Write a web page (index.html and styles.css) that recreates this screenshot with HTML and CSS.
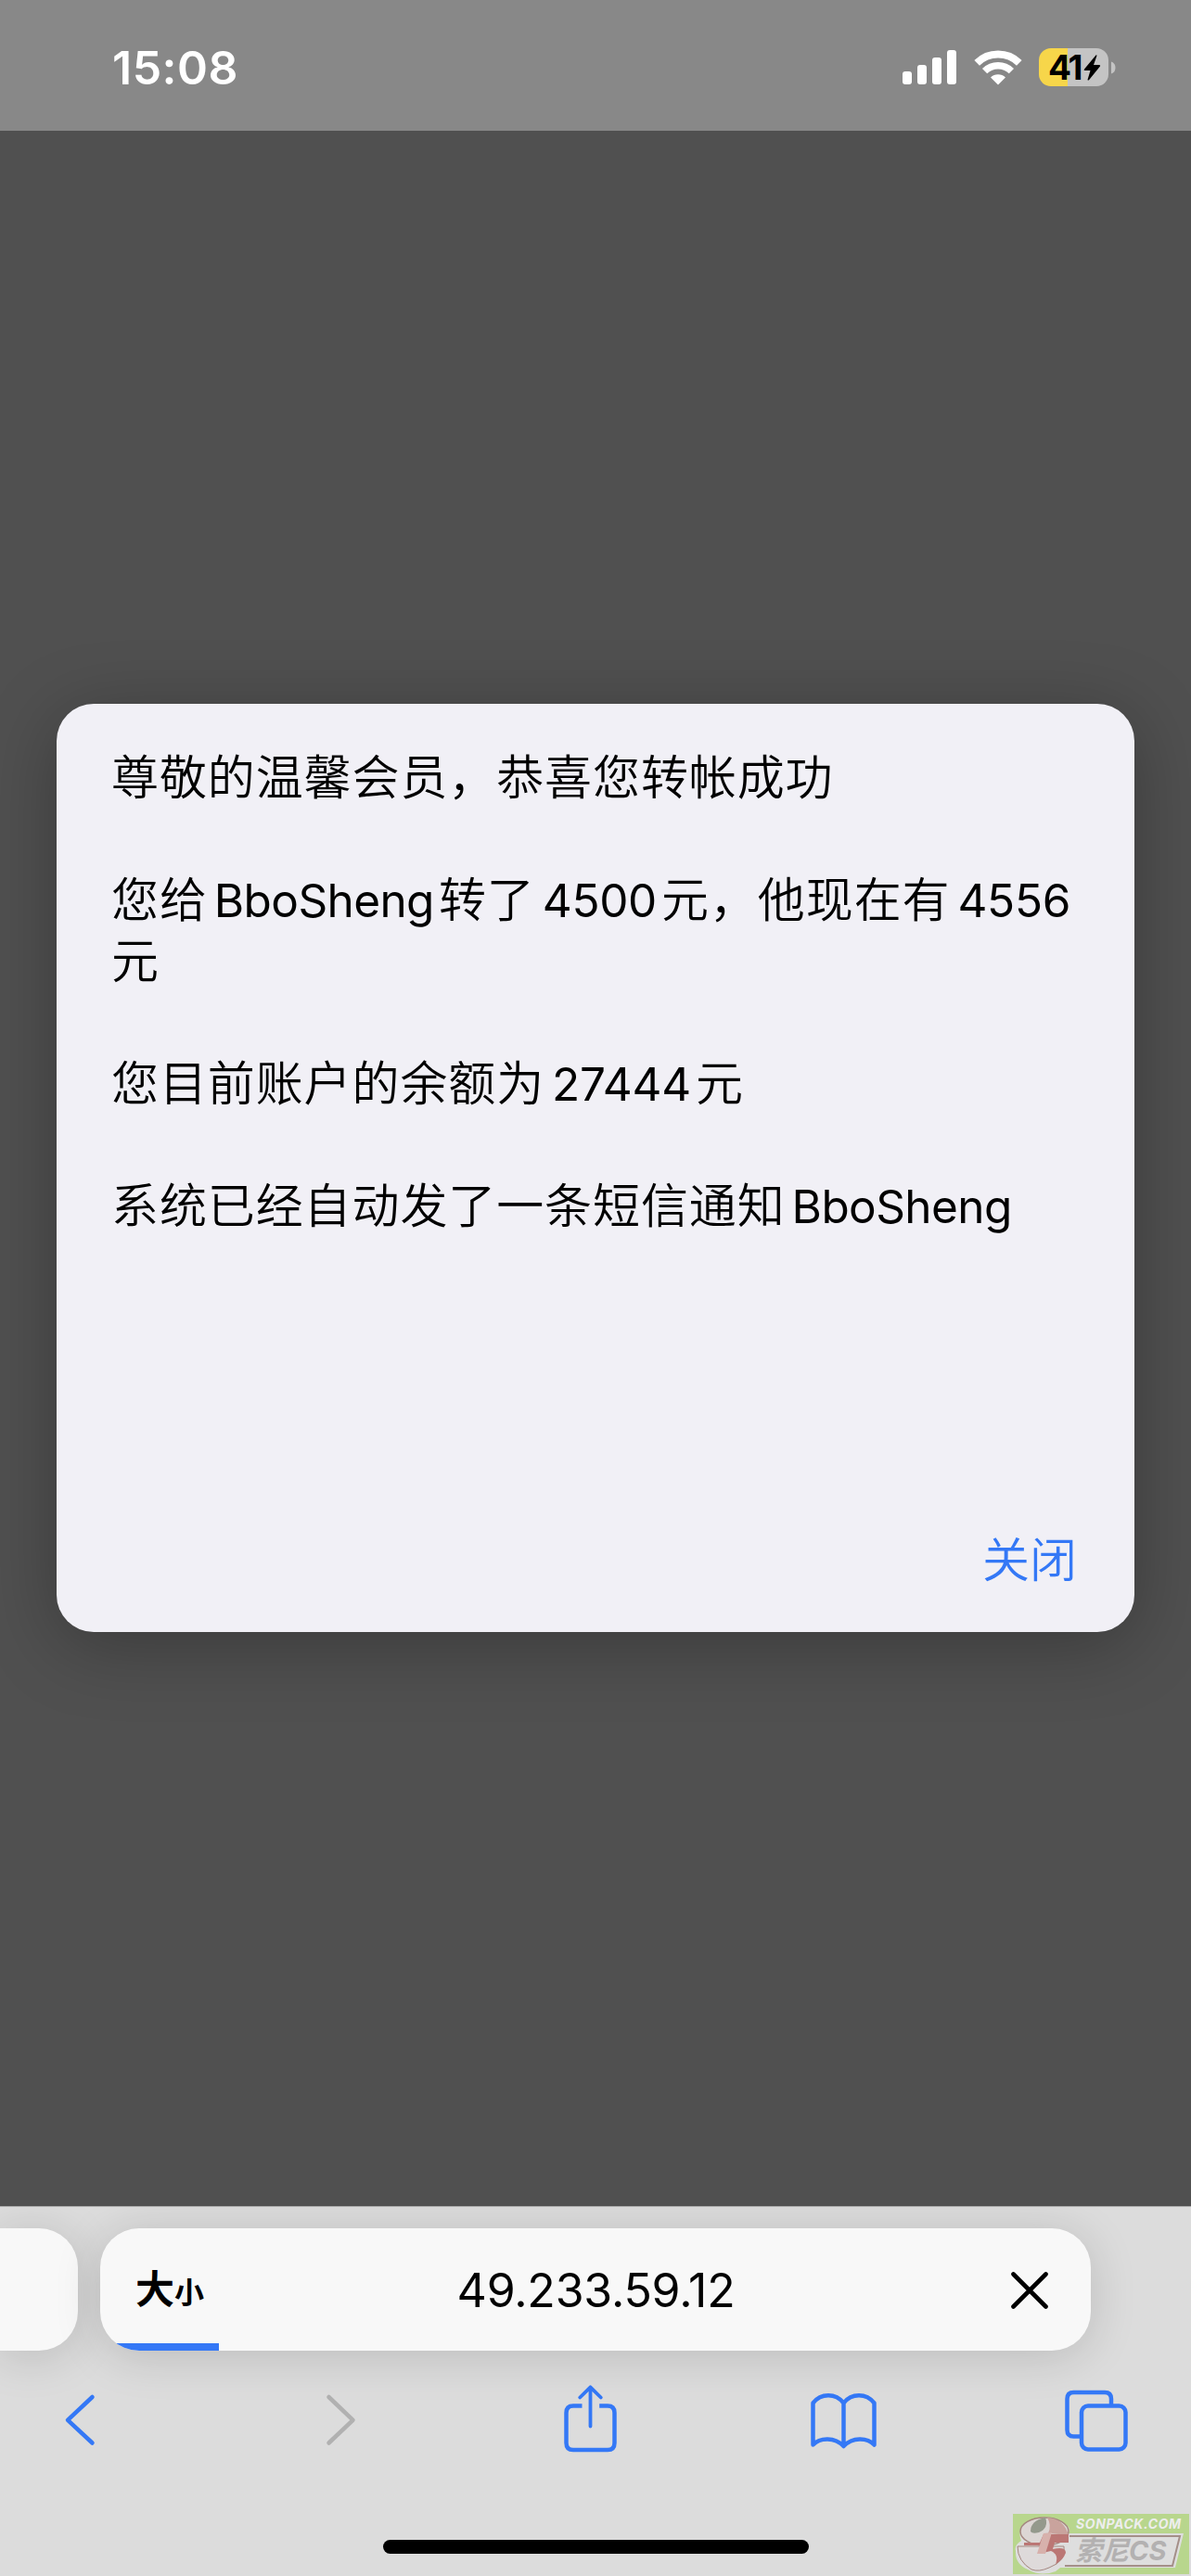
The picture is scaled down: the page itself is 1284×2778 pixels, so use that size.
FILE: index.html
```html
<!DOCTYPE html>
<html lang="zh-CN">

<head>
    <meta charset="UTF-8">
    <meta name="viewport" content="width=device-width, initial-scale=1.0">
    <title>49.233.59.12</title>
    <link rel="stylesheet" href="styles.css">
</head>

<body>
    <!-- Status bar -->
    <header class="status-bar">
        <span class="time">15:08</span>
        <div class="status-icons">
            <svg class="signal" width="58" height="37" viewBox="0 0 58 37" fill="#fff">
                <rect x="0" y="23" width="10" height="14" rx="3" />
                <rect x="16" y="16" width="10" height="21" rx="3" />
                <rect x="32" y="8" width="10" height="29" rx="3" />
                <rect x="48" y="0" width="10" height="37" rx="3" />
            </svg>
            <svg class="wifi" width="52" height="38" viewBox="0 0 52 38" fill="none" stroke="#fff">
                <path d="M3.200 13.800A32.500 32.500 0 0 1 48.800 13.800" stroke-width="8" />
                <path d="M11.600 22.600A20.500 20.500 0 0 1 40.400 22.600" stroke-width="7.500" />
                <path d="M18 29.600A11.500 11.500 0 0 1 34 29.600L26.500 37Q26 37.500 25.500 37Z" fill="#fff" stroke="none" />
            </svg>
            <div class="battery">
                <span class="level">41</span>
                <svg width="19" height="28" viewBox="0 0 19 28">
                    <path d="M13.500 0.500L1 15.500Q0 17 1.500 17H7.500L4.500 27Q5 28 6 27.200L18 12.500Q18.700 11 17 11H11L14.500 1Q14.300 0 13.500 0.500Z" />
                </svg>
            </div>
            <svg width="5" height="14" viewBox="0 0 5 14">
                <path d="M0 0.500Q4.500 2 4.500 7T0 13.500Z" fill="#c4c4c4" />
            </svg>
        </div>
    </header>

    <!-- Page covered by the alert -->
    <main class="page">
        <div class="alert">
            <div class="message">
                <p>尊敬的温馨会员，恭喜您转帐成功</p>
                <p>您给<span class="name">BboSheng</span>转了<span class="num">4500</span>元，他现在有<span class="num">4556</span><br>元</p>
                <p>您目前账户的余额为<span class="num">27444</span>元</p>
                <p>系统已经自动发了一条短信通知<span class="name">BboSheng</span></p>
            </div>
            <button class="close">关闭</button>
        </div>
    </main>

    <!-- Browser bar -->
    <footer class="browser">
        <div class="tabs">
            <div class="tab previous"></div>
            <div class="tab address">
                <span class="text-size"><b>大</b><small>小</small></span>
                <span class="url">49.233.59.12</span>
                <svg class="stop" width="40" height="40" viewBox="0 0 40 40" fill="none" stroke="#000" stroke-width="4.600" stroke-linecap="round">
                    <path d="M2.500 2.500L37.500 37.500M37.500 2.500L2.500 37.500" />
                </svg>
                <div class="progress"></div>
            </div>
        </div>
        <nav class="toolbar">
            <svg width="80" height="80" viewBox="0 0 80 80">
                <path d="M53.500 15L27 39.800L53.500 64.500" />
            </svg>
            <svg class="disabled" width="80" height="80" viewBox="0 0 80 80">
                <path d="M34.500 15L60.500 39.800L34.500 64.500" />
            </svg>
            <svg width="80" height="80" viewBox="0 0 80 80">
                <path d="M33.500 24.500H24Q16.500 24.500 16.500 32V64.500Q16.500 72 24 72H61Q68.500 72 68.500 64.500V32Q68.500 24.500 61 24.500H52.200" stroke-linecap="butt" />
                <path d="M42.500 46.500V5M31.200 15.500L42.500 4.300L53.800 15.500" stroke-width="3.800" />
            </svg>
            <svg width="80" height="80" viewBox="0 0 80 80">
                <path d="M42.500 21.500C34 10.500 18 10.500 9.500 21.500V66.500C17 58.500 33 58 42.500 68C52 58 68 58.500 75.500 66.500V21.500C67 10.500 51 10.500 42.500 21.500ZM42.500 21.500V68" />
            </svg>
            <svg width="80" height="80" viewBox="0 0 80 80">
                <rect x="25" y="24.500" width="47.500" height="47" rx="7" />
                <path d="M57 24V17Q57 10 50 10H16.500Q9.500 10 9.500 17V50.500Q9.500 57.500 16.500 57.500H24" stroke-linecap="butt" />
            </svg>
        </nav>
        <div class="home-indicator"></div>
    </footer>

    <!-- Site badge -->
    <div class="badge">
        <svg width="190" height="65" viewBox="0 0 190 65">
            <path d="M57 21H184L175 58H51L46 62Q30 68 16 60Q2 54 3 40Q1 34 9 29Q3 14 20 8Q36 -1 50 8Q64 13 60 21Z" fill="#dedede" />
            <path d="M61 24H180L172 56H56" fill="none" stroke="#a48f88" stroke-width="2" />
            <ellipse cx="34" cy="19" rx="26" ry="15" fill="#dcd6d4" stroke="#a4867f" stroke-width="1.500" />
            <path d="M37 4Q55 5 60 23L38 21Q42 12 37 4Z" fill="#c9a39d" />
            <path d="M19 19Q19 7 35 4Q39 15 28 20Q21 22 19 19Z" fill="#94998c" />
            <path d="M5 35H55Q58 51 39 58Q28 63 20 60Q5 51 5 35Z" fill="#dedada" stroke="#a4867f" />
            <path d="M12 31H29L33 22H60V31H45L43 38Q57 35 57 42Q54 50 46 54Q50 44 41 40L28 43L30 34H12Z" fill="#bb7775" />
            <path d="M33 21L42 20L35 43L26 43Z" fill="#d7b1ac" />
        </svg>
        <span class="site">SONPACK.COM</span>
        <span class="game">索尼CS</span>
    </div>
</body>

</html>
```
FILE: styles.css
```css
* {
    box-sizing: border-box;
}

body {
    margin: 0;
    width: 1284px;
    height: 2778px;
    display: flex;
    flex-direction: column;
    position: relative;
    overflow: hidden;
    background-color: #505050;
    color: #000;
    font-family: Inter, "Noto Sans CJK SC", sans-serif;
}

svg {
    display: block;
    flex: none;
}

/* Status bar */
.status-bar {
    height: 141px;
    padding: 4px 81px 0 121px;
    display: flex;
    align-items: center;
    justify-content: space-between;
    background-color: #888;
}

.time {
    color: #fff;
    font-size: 50px;
    font-weight: 600;
    line-height: 60px;
    letter-spacing: 0.5px;
}

.status-icons {
    display: flex;
    align-items: center;
}

.wifi {
    margin: 0 18px 0 19px;
}

.battery {
    width: 75px;
    height: 41px;
    margin-right: 3px;
    padding-left: 10px;
    display: flex;
    align-items: center;
    border-radius: 13px;
    background: linear-gradient(to right, #f7d64a 31px, #c4c4c4 31px);
}

.level {
    width: 38px;
    font-size: 37px;
    font-weight: 700;
    letter-spacing: -2px;
}

/* Alert */
.page {
    flex: 1;
    padding: 618px 61px 0;
}

.alert {
    height: 1001px;
    padding: 43px 62px 51px 59px;
    display: flex;
    flex-direction: column;
    justify-content: space-between;
    border-radius: 40px;
    background-color: #f1f0f6;
    box-shadow: 0 14px 80px rgba(0, 0, 0, 0.28);
}

.message p {
    margin: 0 0 66px;
    font-family: "Noto Sans CJK SC", sans-serif;
    font-size: 51px;
    font-weight: 350;
    line-height: 66px;
    letter-spacing: 0.9px;
    white-space: nowrap;
}

.name,
.num {
    font-family: Inter, sans-serif;
    font-size: 49.5px;
    font-weight: 400;
    line-height: 1;
}

.name {
    margin: 0 5px 0 7px;
    letter-spacing: -0.6px;
}

.num {
    margin: 0 5px 0 8px;
    letter-spacing: -0.3px;
}

.close {
    align-self: flex-end;
    padding: 0;
    border: none;
    background: none;
    color: #3478f6;
    font-family: "Noto Sans CJK SC", sans-serif;
    font-size: 51px;
    font-weight: 350;
    line-height: 60px;
}

/* Browser bar */
.browser {
    height: 399px;
    padding-top: 23px;
    border-top: 1px solid #aaa;
    background-color: #dcdcdc;
    overflow: hidden;
}

.tabs {
    display: flex;
    gap: 24px;
}

.tab {
    height: 132px;
    border-radius: 42px;
    background-color: #f8f8f8;
    box-shadow: 0 6px 50px rgba(0, 0, 0, 0.15);
}

.previous {
    width: 84px;
    border-top-left-radius: 0;
    border-bottom-left-radius: 0;
}

.address {
    width: 1068px;
    padding: 2px 46px 0 38px;
    position: relative;
    display: flex;
    align-items: center;
    justify-content: space-between;
}

.text-size {
    width: 120px;
    display: flex;
    align-items: baseline;
    font-family: "Noto Sans CJK SC", sans-serif;
    line-height: 56px;
    margin-top: -4px;
}

.text-size b {
    font-size: 42px;
    font-weight: 700;
}

.text-size small {
    font-size: 32px;
    font-weight: 700;
}

.url {
    margin-right: 71px;
    font-size: 50px;
    letter-spacing: -0.2px;
}

/* Loading bar on the bottom edge of the address field */
.progress {
    position: absolute;
    inset: 0;
    border-radius: 42px;
    background: linear-gradient(#3478f6, #3478f6) left bottom / 128px 8px no-repeat;
}

.toolbar {
    margin-top: 35px;
    padding: 0 63px 0 46px;
    display: flex;
    justify-content: space-between;
}

.toolbar svg {
    fill: none;
    stroke: #3478f6;
    stroke-width: 4.5;
    stroke-linecap: round;
    stroke-linejoin: round;
}

.toolbar .disabled {
    stroke: #b1b1b1;
}

.home-indicator {
    width: 459px;
    height: 15px;
    margin: 89px auto 0;
    border-radius: 8px;
    background-color: #000;
}

/* Badge laid over the corner of the screen */
.badge {
    position: absolute;
    right: 2px;
    bottom: 2px;
    width: 190px;
    height: 65px;
    background-color: #b8d68d;
}

.site,
.game {
    position: absolute;
    font-style: italic;
    font-weight: 700;
    white-space: nowrap;
}

.site {
    top: 4px;
    left: 68px;
    color: #eee;
    font-size: 14px;
    line-height: 14px;
    letter-spacing: 0.6px;
}

.game {
    top: 26px;
    left: 67px;
    color: #b3b1b1;
    font-size: 29px;
    line-height: 28px;
}
```
